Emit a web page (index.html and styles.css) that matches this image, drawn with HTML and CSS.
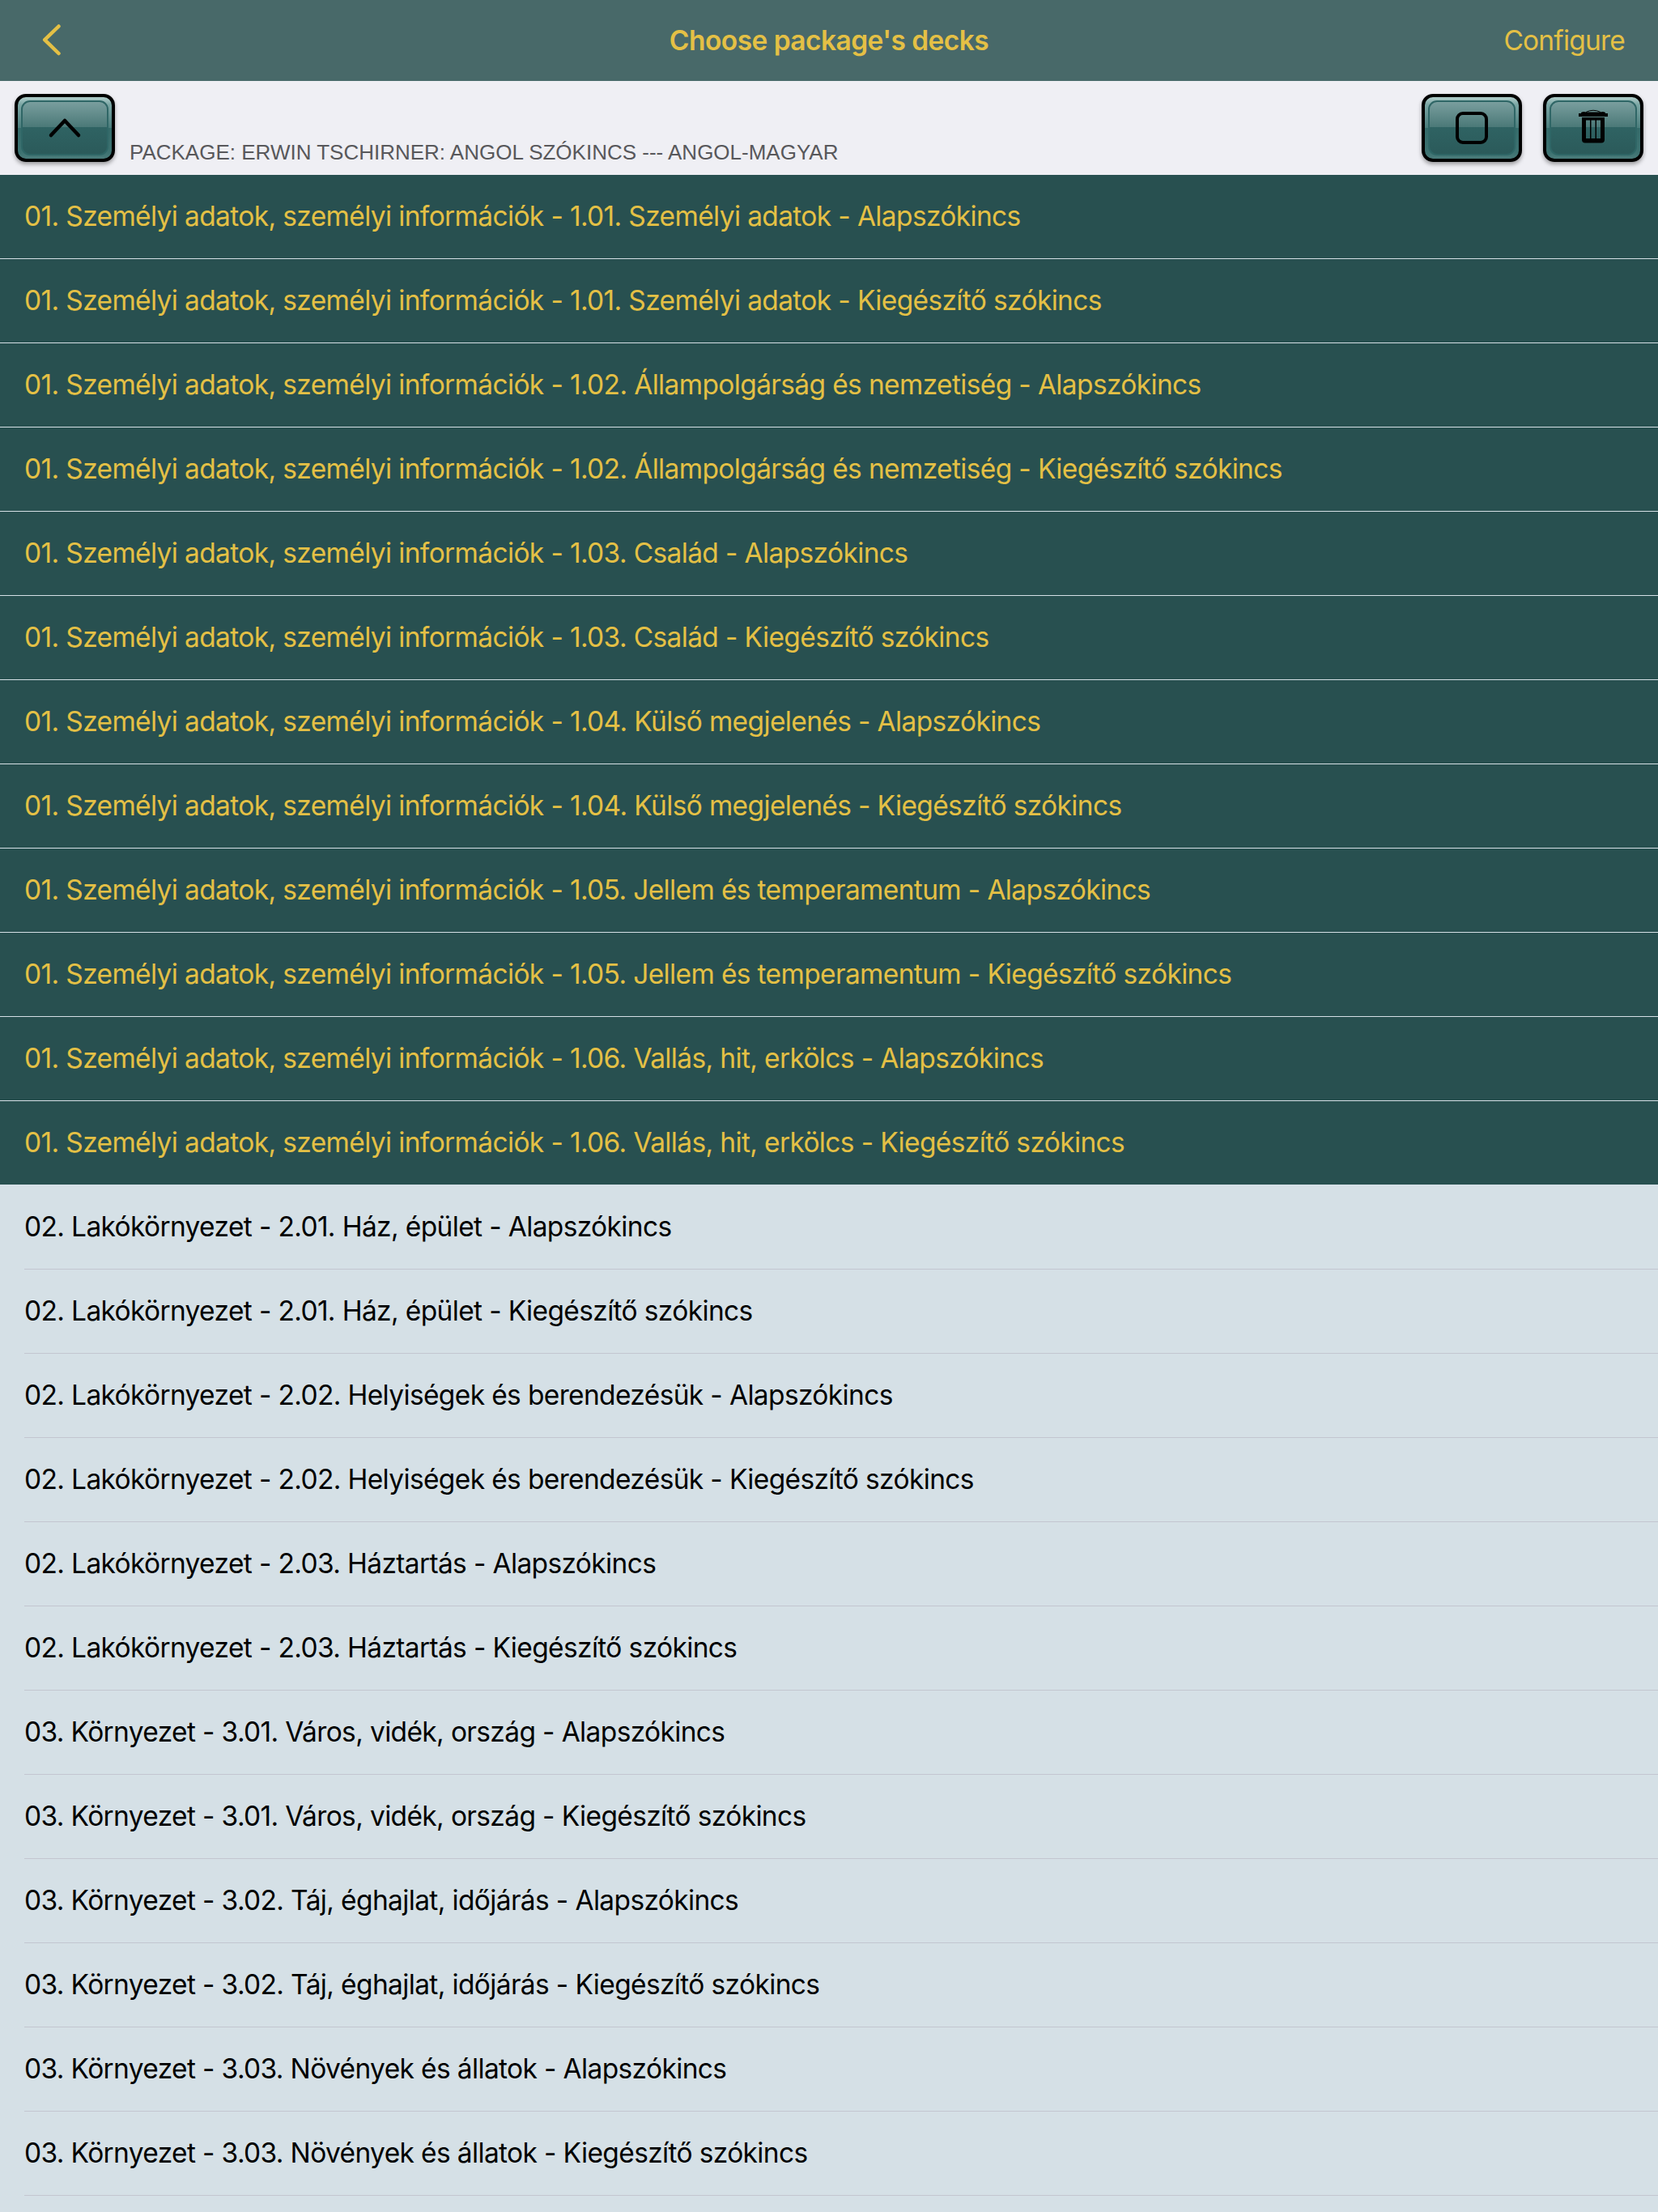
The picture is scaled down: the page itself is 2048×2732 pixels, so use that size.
FILE: index.html
```html
<!DOCTYPE html>
<html lang="hu">
<head>
<meta charset="utf-8">
<title>Choose package's decks</title>
<link rel="stylesheet" href="styles.css">
</head>
<body>
<header class="navbar">
  <div class="nav-side"><svg class="back" viewBox="0 0 24 40" width="24" height="40"><path d="M20.5 2.5 3.2 19.2 20.5 36"/></svg></div>
  <h1 class="nav-title">Choose package's decks</h1>
  <div class="nav-side nav-action">Configure</div>
</header>
<section class="package">
  <button class="key"><span class="frame"></span><svg class="glyph" viewBox="0 0 124 84" width="124" height="84"><path class="stroke round" d="M45 51 62 33 79 51"/></svg></button>
  <p class="package-name">PACKAGE: ERWIN TSCHIRNER: ANGOL SZÓKINCS --- ANGOL-MAGYAR</p>
  <button class="key"><span class="frame"></span><svg class="glyph" viewBox="0 0 124 84" width="124" height="84"><rect class="stroke" x="44" y="24" width="36" height="36" rx="7"/></svg></button>
  <button class="key"><span class="frame"></span><svg class="glyph" viewBox="0 0 124 84" width="124" height="84"><path class="stroke thin" d="M53 22.5q9-4.5 18 0"/><path d="M47 23q3-1.500 6-.5h18q3-1 6 .5v1h3v4H44v-4h3z"/><path fill-rule="evenodd" d="M48 29h28v27.500q0 4-4 4H52q-4 0-4-4zM53 32.500v22.500h5V32.500zM59.500 32.500v22.500h5V32.500zM66 32.500v22.500h5V32.500z"/></svg></button>
</section>
<ul class="decks">
  <li class="deck selected">01. Személyi adatok, személyi információk - 1.01. Személyi adatok - Alapszókincs</li>
  <li class="deck selected">01. Személyi adatok, személyi információk - 1.01. Személyi adatok - Kiegészítő szókincs</li>
  <li class="deck selected">01. Személyi adatok, személyi információk - 1.02. Állampolgárság és nemzetiség - Alapszókincs</li>
  <li class="deck selected">01. Személyi adatok, személyi információk - 1.02. Állampolgárság és nemzetiség - Kiegészítő szókincs</li>
  <li class="deck selected">01. Személyi adatok, személyi információk - 1.03. Család - Alapszókincs</li>
  <li class="deck selected">01. Személyi adatok, személyi információk - 1.03. Család - Kiegészítő szókincs</li>
  <li class="deck selected">01. Személyi adatok, személyi információk - 1.04. Külső megjelenés - Alapszókincs</li>
  <li class="deck selected">01. Személyi adatok, személyi információk - 1.04. Külső megjelenés - Kiegészítő szókincs</li>
  <li class="deck selected">01. Személyi adatok, személyi információk - 1.05. Jellem és temperamentum - Alapszókincs</li>
  <li class="deck selected">01. Személyi adatok, személyi információk - 1.05. Jellem és temperamentum - Kiegészítő szókincs</li>
  <li class="deck selected">01. Személyi adatok, személyi információk - 1.06. Vallás, hit, erkölcs - Alapszókincs</li>
  <li class="deck selected">01. Személyi adatok, személyi információk - 1.06. Vallás, hit, erkölcs - Kiegészítő szókincs</li>
  <li class="deck">02. Lakókörnyezet - 2.01. Ház, épület - Alapszókincs</li>
  <li class="deck">02. Lakókörnyezet - 2.01. Ház, épület - Kiegészítő szókincs</li>
  <li class="deck">02. Lakókörnyezet - 2.02. Helyiségek és berendezésük - Alapszókincs</li>
  <li class="deck">02. Lakókörnyezet - 2.02. Helyiségek és berendezésük - Kiegészítő szókincs</li>
  <li class="deck">02. Lakókörnyezet - 2.03. Háztartás - Alapszókincs</li>
  <li class="deck">02. Lakókörnyezet - 2.03. Háztartás - Kiegészítő szókincs</li>
  <li class="deck">03. Környezet - 3.01. Város, vidék, ország - Alapszókincs</li>
  <li class="deck">03. Környezet - 3.01. Város, vidék, ország - Kiegészítő szókincs</li>
  <li class="deck">03. Környezet - 3.02. Táj, éghajlat, időjárás - Alapszókincs</li>
  <li class="deck">03. Környezet - 3.02. Táj, éghajlat, időjárás - Kiegészítő szókincs</li>
  <li class="deck">03. Környezet - 3.03. Növények és állatok - Alapszókincs</li>
  <li class="deck">03. Környezet - 3.03. Növények és állatok - Kiegészítő szókincs</li>
</ul>
</body>
</html>
```
FILE: styles.css
```css
* { box-sizing: border-box; }
body {
  margin: 0;
  height: 2732px;
  overflow: hidden;
  background: #d5e0e6;
  font-family: Inter, "Liberation Sans", sans-serif;
  font-size: 33.5px;
}
.navbar {
  height: 100px;
  padding: 0 41px;
  display: grid;
  grid-template-columns: 1fr auto 1fr;
  align-items: center;
  background: #486969;
  color: #e4c045;
}
.back { display: block; margin-left: 11px; fill: none; stroke: #e4c045; stroke-width: 4.5; stroke-linecap: round; stroke-linejoin: round; }
.nav-title { margin: 0; font-size: 33.5px; font-weight: 600; letter-spacing: -0.55px; }
.nav-action { text-align: right; letter-spacing: -0.8px; }
.package {
  height: 116px;
  padding: 16px 18px;
  display: flex;
  align-items: flex-start;
  gap: 26px;
  background: #efeff4;
}
.package-name {
  flex: 1;
  margin: 57px 0 0 -8px;
  font: 26px/30px "Liberation Sans", Arial, sans-serif;
  color: #58585b;
}
.key {
  position: relative;
  flex: none;
  width: 124px;
  height: 84px;
  padding: 0;
  border: 4px solid #000;
  border-radius: 14px;
  background:
    linear-gradient(#b2cfcc, #7ba6a4 12%, #4b7d7c 50%, #356b6a 50%, #3d7271 90%, #4a7b7a);
  box-shadow: 0 3px 5px rgba(0, 0, 0, 0.35);
}
.frame {
  position: absolute;
  inset: 4px;
  border: 2px solid #2f6666;
  border-radius: 11px;
  background: linear-gradient(#799e9e, #4b7978 48%, #2f6363 48%, #2b5a5a);
}
.glyph { position: absolute; left: -4px; top: -4px; }
.stroke { fill: none; stroke: #000; stroke-width: 4; }
.round { stroke-width: 4.5; stroke-linecap: round; stroke-linejoin: round; }
.thin { stroke-width: 1; }
.decks { margin: 0; padding: 0; list-style: none; }
.deck {
  height: 104px;
  padding-left: 30px;
  line-height: 103px;
  letter-spacing: -0.64px;
  white-space: nowrap;
  color: #000;
  background: linear-gradient(#c3c6d0, #c3c6d0) 30px 103px / 100% 1px no-repeat;
}
.deck.selected {
  color: #e4c045;
  background: #285050;
  border-bottom: 1px solid #d5e0e6;
}
```
